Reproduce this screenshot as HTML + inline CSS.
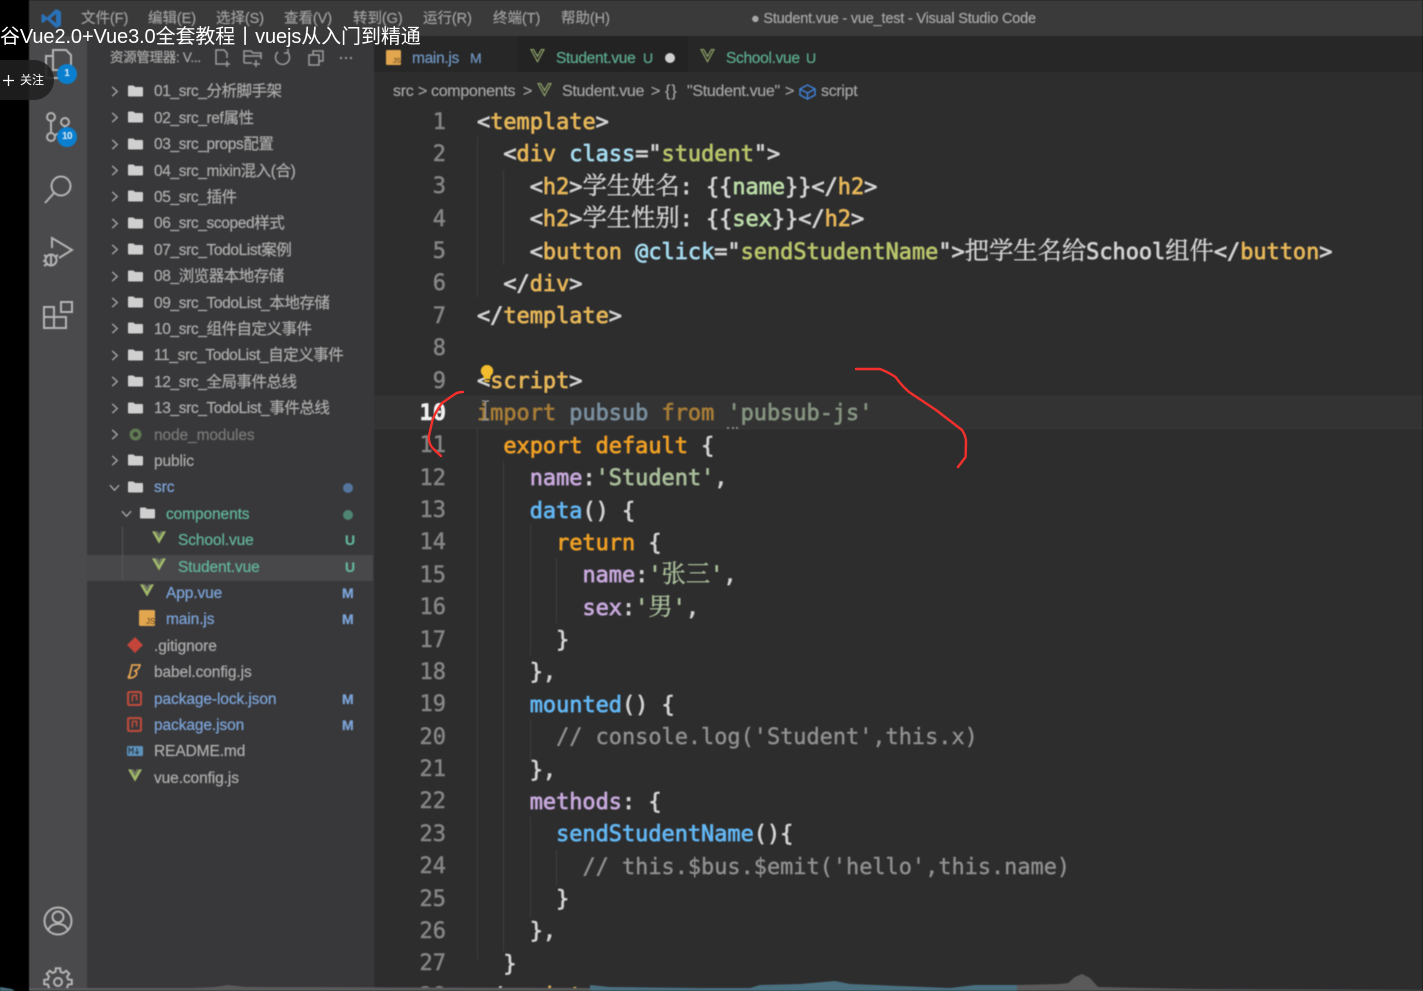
<!DOCTYPE html>
<html lang="zh"><head><meta charset="utf-8"><title>Student.vue - vue_test - Visual Studio Code</title>
<style>
html,body{margin:0;padding:0;background:#000;width:1423px;height:991px;overflow:hidden}
*{box-sizing:border-box}
#video{position:absolute;left:0;top:0;width:1423px;height:991px;overflow:hidden;filter:blur(.55px)}
.ui{font-family:"Liberation Sans","Noto Sans CJK SC",sans-serif;white-space:nowrap}
.menu span{position:absolute;top:9px;font-size:14.5px;line-height:20px;color:#a0a0a0;letter-spacing:-.05px;-webkit-text-stroke:.2px currentColor}
#tree{position:absolute;left:87px;top:79.3px;width:286px}
#tree .r{position:relative;height:26.42px;line-height:26.42px;font-size:15.5px;letter-spacing:-.1px;color:#ababab;white-space:nowrap;-webkit-text-stroke:.25px currentColor}
#tree .r:nth-child(-n+13) .t{letter-spacing:-.38px}
#tree .r i{font-style:normal;letter-spacing:-.5px}
#tree .r.sel{background:#48484a}
#tree .t{position:absolute;left:67px;top:0}
#tree .t.d1{left:79px}#tree .t.d2{left:91px}
#tree .c{position:absolute;left:22px;top:6.5px}
#tree .f{position:absolute;left:41px;top:5.5px}
#tree .st{position:absolute;left:255px;top:-1px;font-weight:bold;font-size:14px}
.g{color:#62b39a}.b{color:#7ba2d6}
.tab span,.bc span,.bc svg,.tab svg{position:absolute}
#nums{position:absolute;left:400px;top:106.5px;width:46px;text-align:right;font-family:"DejaVu Sans Mono","Liberation Mono",monospace;font-size:22px;line-height:32.38px;color:#858585;-webkit-text-stroke:.5px currentColor}
#nums div{height:32.38px}
#code{position:absolute;left:477px;top:107px;font-family:"DejaVu Sans Mono","Liberation Mono",monospace;font-size:21.9px;line-height:32.38px;color:#d2d2d2;-webkit-text-stroke:.75px currentColor}
#code div{height:32.38px;white-space:pre}
.tg{color:#e6b658}.at{color:#a4dbef}.s{color:#b9c46a}.kw{color:#ee9f24}.pr{color:#c7a8dc}.fn{color:#62b6f2}.st2{color:#a8bc98}.cm{color:#909090;-webkit-text-stroke:.4px currentColor}.nm{color:#b9dba6}
.cj{font-family:"Noto Serif CJK SC","Noto Sans CJK SC",serif;font-size:24.3px;line-height:0;-webkit-text-stroke:.4px currentColor}
.gd{position:absolute;width:1px;background:#3f3f3f}
</style></head>
<body>
<svg width="0" height="0" style="position:absolute"><defs>
<symbol id="chev" viewBox="0 0 12 12"><path d="M3.500 1 9 6 3.500 11" fill="none" stroke="#a6a6a6" stroke-width="1.500"/></symbol>
<symbol id="chevd" viewBox="0 0 12 12"><path d="M1 3.500 6 9 11 3.500" fill="none" stroke="#a6a6a6" stroke-width="1.500"/></symbol>
<symbol id="folder" viewBox="0 0 15 12"><path d="M0 1.500Q0 .5 1 .5H5.500L7 2H14Q15 2 15 3V10.500Q15 11.500 14 11.500H1Q0 11.500 0 10.500Z" fill="#cfcfcf"/></symbol>
<symbol id="vue" viewBox="0 0 16 14"><path d="M0 0H3.500L8 8 12.500 0H16L8 14Z" fill="#a1b96a"/><path d="M3.500 0H6.500L8 3 9.500 0H12.500L8 8Z" fill="#6e7560"/></symbol>
<symbol id="vue2" viewBox="0 0 16 16"><path d="M.5 .5H3.500L8 8.500 12.500 .5H15.500L8 14.500Z" fill="none" stroke="#92a86a" stroke-width="1.300"/></symbol>
<symbol id="js" viewBox="0 0 16 16"><rect width="16" height="16" rx="1.500" fill="#e2a64f"/><text x="7" y="14" font-family="Liberation Sans" font-size="8" fill="#5b4322">JS</text></symbol>
<symbol id="pkg" viewBox="0 0 14 14"><rect x="1" y="1" width="12" height="12" rx="1" fill="none" stroke="#bb4a3c" stroke-width="2"/><path d="M5 4V10M5 4H9V9" fill="none" stroke="#bb4a3c" stroke-width="1.500"/></symbol>
</defs></svg>

<div id="video">
<!-- panels -->
<div style="position:absolute;left:29px;top:0;width:1394px;height:36px;background:#3a3a3b"></div>
<div style="position:absolute;left:29px;top:36px;width:58px;height:955px;background:#4a4a4c"></div>
<div style="position:absolute;left:87px;top:36px;width:287px;height:955px;background:#38383a"></div>
<div style="position:absolute;left:374px;top:36px;width:1049px;height:36px;background:#272727"></div>
<div style="position:absolute;left:518px;top:36px;width:170px;height:36px;background:#232323"></div>
<div style="position:absolute;left:374px;top:72px;width:1049px;height:919px;background:#2d2d2e"></div>

<!-- title bar -->
<svg style="position:absolute;left:41px;top:8px" width="21" height="21" viewBox="0 0 21 21"><path d="M15 1 20 3.500V17.500L15 20 6 11.500 2 15 .5 14V7L2 6 6 9.500ZM15 6 9.500 10.500 15 15Z" fill="#2a72b8"/></svg>
<div class="ui menu">
<span style="left:81px">文件(F)</span><span style="left:148px">编辑(E)</span><span style="left:216px">选择(S)</span><span style="left:284px">查看(V)</span><span style="left:353px">转到(G)</span><span style="left:423px">运行(R)</span><span style="left:493px">终端(T)</span><span style="left:561px">帮助(H)</span>
<span style="left:751px;font-size:14.5px;letter-spacing:-.2px;color:#a8a8a8">● Student.vue - vue_test - Visual Studio Code</span>
</div>

<!-- activity bar -->
<svg style="position:absolute;left:29px;top:36px" width="58" height="955" viewBox="0 0 58 955" fill="none" stroke="#b4b4b4" stroke-width="2">
<path d="M24 14H37L42 19V34H24ZM24 20H17V42H33V34"/>
<circle cx="22" cy="81" r="4"/><circle cx="22" cy="101" r="4"/><circle cx="36" cy="86" r="4"/><path d="M22 85V97M36 90Q36 95 26 99"/>
<circle cx="32" cy="150" r="9.500"/><path d="M25 157 16 167"/>
<path d="M23 212V202L43 214 30 222"/><circle cx="22" cy="224" r="5.500"/><path d="M15 219 18 221M15 230 18 228M29 219 26 221M14 225H17M22 218V230"/>
<path d="M15 271H25V292H15ZM15 281H37V292H25V281M32 266H43V276H32Z"/>
<circle cx="29" cy="885" r="13.500"/><circle cx="29" cy="881" r="5.500"/><path d="M19 895Q21 888 29 888 37 888 39 895"/>
<g transform="translate(29 946)"><circle r="4"/><path d="M-2.500 -10.200-2.200 -13.800 2.200 -13.800 2.500 -10.200 5.400 -9 8.200 -11.300 11.300 -8.200 9 -5.400 10.200 -2.500 13.800 -2.200 13.800 2.200 10.200 2.500 9 5.400 11.300 8.200 8.200 11.300 5.400 9 2.500 10.200 2.200 13.800 -2.200 13.800 -2.500 10.200 -5.400 9 -8.200 11.300 -11.300 8.200 -9 5.400 -10.200 2.500 -13.800 2.200 -13.800 -2.200 -10.200 -2.500 -9 -5.400 -11.300 -8.200 -8.200 -11.300 -5.400 -9Z"/></g>
</svg>
<div class="ui" style="position:absolute;left:57px;top:64px;width:20px;height:20px;border-radius:50%;background:#0a7fd0;color:#dfeaf5;font-size:10px;line-height:20px;text-align:center;font-weight:bold">1</div>
<div class="ui" style="position:absolute;left:57px;top:127px;width:20px;height:20px;border-radius:50%;background:#0a7fd0;color:#dfeaf5;font-size:10px;line-height:20px;text-align:center;font-weight:bold;letter-spacing:-.5px">10</div>

<!-- explorer header -->
<div class="ui" style="position:absolute;left:110px;top:48px;font-size:13.5px;line-height:20px;color:#a5a5a5;letter-spacing:-.3px;-webkit-text-stroke:.3px currentColor">资源管理器: V...</div>
<svg style="position:absolute;left:212px;top:47px" width="146" height="22" viewBox="0 0 146 22" fill="none" stroke="#9c9c9c" stroke-width="1.500">
<path d="M12 17H4V3H12L15 6V11M15 14V20M12 17H18"/>
<path d="M32 16V4H39L41 6H49V12M44 13V20M41 17H48M32 16H40M32 9H49"/>
<path d="M66 5A7 7 0 1 0 76 6M76 2V6H72" />
<path d="M97 8H107V18H97ZM101 8V4H111V14H107"/>
<path d="M128 11H130M133 11H135M138 11H140" stroke-width="2"/>
</svg>

<!-- tabs -->
<div class="ui tab" style="font-size:15.5px;letter-spacing:-.3px;-webkit-text-stroke:.25px currentColor">
<svg style="left:386px;top:50px" width="15" height="15"><use href="#js"/></svg>
<span style="left:412px;top:50px;color:#6e93bf">main.js</span><span style="left:470px;top:50px;color:#6e93bf;font-size:14px">M</span>
<svg style="left:530px;top:49px" width="15" height="14"><use href="#vue2"/></svg>
<span style="left:556px;top:50px;color:#5cab8e">Student.vue</span><span style="left:643px;top:50px;color:#5cab8e;font-size:14px">U</span>
<span style="left:665px;top:53px;width:10px;height:10px;border-radius:50%;background:#d0d0d0"></span>
<svg style="left:700px;top:49px" width="15" height="14"><use href="#vue2"/></svg>
<span style="left:726px;top:50px;color:#5cab8e">School.vue</span><span style="left:806px;top:50px;color:#5cab8e;font-size:14px">U</span>
</div>

<!-- breadcrumbs -->
<div class="ui bc" style="font-size:16px;letter-spacing:-.3px;color:#a4a4a4;-webkit-text-stroke:.2px currentColor">
<span style="left:393px;top:83px">src</span><span style="left:418px;top:83px">&gt;</span><span style="left:431px;top:83px">components</span><span style="left:523px;top:83px">&gt;</span>
<svg style="left:537px;top:83px" width="15" height="14"><use href="#vue2"/></svg>
<span style="left:562px;top:83px">Student.vue</span><span style="left:651px;top:83px">&gt;</span><span style="left:665px;top:83px;letter-spacing:1px">{}</span><span style="left:687px;top:83px">"Student.vue"</span><span style="left:785px;top:83px">&gt;</span>
<svg style="left:799px;top:84px" width="17" height="16" viewBox="0 0 17 16" fill="none" stroke="#3f7fd0" stroke-width="1.500"><path d="M8.500 1 16 5V11L8.500 15 1 11V5ZM1 5 8.500 9 16 5M8.500 9V15"/></svg>
<span style="left:821px;top:83px">script</span>
</div>

<!-- tree -->
<div id="tree" class="ui">
<div class="r"><svg class="c" width="11" height="11"><use href="#chev"/></svg><svg class="f" width="15" height="12"><use href="#folder"/></svg><span class="t">01_src_<i>分析脚手架</i></span></div>
<div class="r"><svg class="c" width="11" height="11"><use href="#chev"/></svg><svg class="f" width="15" height="12"><use href="#folder"/></svg><span class="t">02_src_ref<i>属性</i></span></div>
<div class="r"><svg class="c" width="11" height="11"><use href="#chev"/></svg><svg class="f" width="15" height="12"><use href="#folder"/></svg><span class="t">03_src_props<i>配置</i></span></div>
<div class="r"><svg class="c" width="11" height="11"><use href="#chev"/></svg><svg class="f" width="15" height="12"><use href="#folder"/></svg><span class="t">04_src_mixin<i>混入</i>(<i>合</i>)</span></div>
<div class="r"><svg class="c" width="11" height="11"><use href="#chev"/></svg><svg class="f" width="15" height="12"><use href="#folder"/></svg><span class="t">05_src_<i>插件</i></span></div>
<div class="r"><svg class="c" width="11" height="11"><use href="#chev"/></svg><svg class="f" width="15" height="12"><use href="#folder"/></svg><span class="t">06_src_scoped<i>样式</i></span></div>
<div class="r"><svg class="c" width="11" height="11"><use href="#chev"/></svg><svg class="f" width="15" height="12"><use href="#folder"/></svg><span class="t">07_src_TodoList<i>案例</i></span></div>
<div class="r"><svg class="c" width="11" height="11"><use href="#chev"/></svg><svg class="f" width="15" height="12"><use href="#folder"/></svg><span class="t">08_<i>浏览器本地存储</i></span></div>
<div class="r"><svg class="c" width="11" height="11"><use href="#chev"/></svg><svg class="f" width="15" height="12"><use href="#folder"/></svg><span class="t">09_src_TodoList_<i>本地存储</i></span></div>
<div class="r"><svg class="c" width="11" height="11"><use href="#chev"/></svg><svg class="f" width="15" height="12"><use href="#folder"/></svg><span class="t">10_src_<i>组件自定义事件</i></span></div>
<div class="r"><svg class="c" width="11" height="11"><use href="#chev"/></svg><svg class="f" width="15" height="12"><use href="#folder"/></svg><span class="t">11_src_TodoList_<i>自定义事件</i></span></div>
<div class="r"><svg class="c" width="11" height="11"><use href="#chev"/></svg><svg class="f" width="15" height="12"><use href="#folder"/></svg><span class="t">12_src_<i>全局事件总线</i></span></div>
<div class="r"><svg class="c" width="11" height="11"><use href="#chev"/></svg><svg class="f" width="15" height="12"><use href="#folder"/></svg><span class="t">13_src_TodoList_<i>事件总线</i></span></div>
<div class="r"><svg class="c" width="11" height="11"><use href="#chev"/></svg><svg class="f" width="15" height="13" viewBox="0 0 15 13"><circle cx="7.500" cy="6.500" r="6" fill="#5f7a52"/><circle cx="7.500" cy="6.500" r="2.500" fill="#38383a"/></svg><span class="t" style="color:#777">node_modules</span></div>
<div class="r"><svg class="c" width="11" height="11"><use href="#chev"/></svg><svg class="f" width="15" height="12"><use href="#folder"/></svg><span class="t">public</span></div>
<div class="r"><svg class="c" width="11" height="11"><use href="#chevd"/></svg><svg class="f" width="15" height="12"><use href="#folder"/></svg><span class="t b">src</span><span style="position:absolute;left:256px;top:8px;width:10px;height:10px;border-radius:50%;background:#55749b"></span></div>
<div class="r"><svg class="c" style="left:34px" width="11" height="11"><use href="#chevd"/></svg><svg class="f" style="left:53px" width="15" height="12"><use href="#folder"/></svg><span class="t d1 g">components</span><span style="position:absolute;left:256px;top:8px;width:10px;height:10px;border-radius:50%;background:#4f8573"></span></div>
<div class="r"><svg class="f" style="left:65px;top:3px" width="14" height="13"><use href="#vue"/></svg><span class="t d2 g">School.vue</span><span class="st g" style="left:258px">U</span></div>
<div class="r sel"><svg class="f" style="left:65px;top:3px" width="14" height="13"><use href="#vue"/></svg><span class="t d2 g">Student.vue</span><span class="st g" style="left:258px">U</span></div>
<div class="r"><svg class="f" style="left:53px;top:3px" width="14" height="13"><use href="#vue"/></svg><span class="t d1 b">App.vue</span><span class="st b">M</span></div>
<div class="r"><svg class="f" style="left:52px;top:3px" width="16" height="16"><use href="#js"/></svg><span class="t d1 b">main.js</span><span class="st b">M</span></div>
<div class="r"><svg class="f" style="left:40px;top:3px" width="16" height="16" viewBox="0 0 16 16"><path d="M8 0 16 8 8 16 0 8Z" fill="#c4453a"/></svg><span class="t">.gitignore</span></div>
<div class="r"><svg class="f" style="left:40px;top:3px" width="15" height="16" viewBox="0 0 15 16" fill="none" stroke="#e0a050" stroke-width="1.800"><path d="M5 2H13Q12 7 7 8 11 8 9 12 7 15 2 15ZM3 11 1 15"/></svg><span class="t">babel.config.js</span></div>
<div class="r"><svg class="f" style="left:40px;top:4px" width="15" height="15"><use href="#pkg"/></svg><span class="t b">package-lock.json</span><span class="st b">M</span></div>
<div class="r"><svg class="f" style="left:40px;top:4px" width="15" height="15"><use href="#pkg"/></svg><span class="t b">package.json</span><span class="st b">M</span></div>
<div class="r"><svg class="f" style="left:40px;top:7px" width="16" height="10" viewBox="0 0 16 10"><rect width="16" height="10" rx="1.500" fill="#5d93bd"/><path d="M2 8V2L4 5 6 2V8M10 2V7M8 5.500 10 8 12 5.500" fill="none" stroke="#2f3a44" stroke-width="1"/></svg><span class="t">README.md</span></div>
<div class="r"><svg class="f" style="left:41px;top:3px" width="14" height="13"><use href="#vue"/></svg><span class="t">vue.config.js</span></div>
</div>
<div style="position:absolute;left:122px;top:527px;width:1px;height:53px;background:#555"></div>

<!-- editor -->
<div style="position:absolute;left:374px;top:396px;width:1049px;height:33px;background:#333334;border-top:1px solid #383838;border-bottom:1px solid #383838"></div>
<div class="gd" style="left:477px;top:137px;height:160px"></div>
<div class="gd" style="left:477px;top:429px;height:530px"></div>
<div class="gd" style="left:503px;top:170px;height:95px"></div>
<div class="gd" style="left:503px;top:461px;height:490px"></div>
<div class="gd" style="left:530px;top:525px;height:130px"></div>
<div class="gd" style="left:530px;top:720px;height:40px"></div>
<div class="gd" style="left:530px;top:817px;height:100px"></div>
<div class="gd" style="left:556px;top:558px;height:65px"></div>
<div class="gd" style="left:556px;top:850px;height:35px"></div>

<div id="nums"><div>1</div><div>2</div><div>3</div><div>4</div><div>5</div><div>6</div><div>7</div><div>8</div><div>9</div><div style="color:#f0f0f0;font-weight:bold">10</div><div>11</div><div>12</div><div>13</div><div>14</div><div>15</div><div>16</div><div>17</div><div>18</div><div>19</div><div>20</div><div>21</div><div>22</div><div>23</div><div>24</div><div>25</div><div>26</div><div>27</div><div>28</div></div>

<div id="code"><div>&lt;<span class="tg">template</span>&gt;</div><div>  &lt;<span class="tg">div</span> <span class="at">class</span>="<span class="s">student</span>"&gt;</div><div>    &lt;<span class="tg">h2</span>&gt;<span class="cj">学生姓名</span>: {{<span class="nm">name</span>}}&lt;/<span class="tg">h2</span>&gt;</div><div>    &lt;<span class="tg">h2</span>&gt;<span class="cj">学生性别</span>: {{<span class="nm">sex</span>}}&lt;/<span class="tg">h2</span>&gt;</div><div>    &lt;<span class="tg">button</span> <span class="at">@click</span>="<span class="s">sendStudentName</span>"&gt;<span class="cj">把学生名给</span>School<span class="cj">组件</span>&lt;/<span class="tg">button</span>&gt;</div><div>  &lt;/<span class="tg">div</span>&gt;</div><div>&lt;/<span class="tg">template</span>&gt;</div><div> </div><div>&lt;<span class="tg">script</span>&gt;</div><div><span style="color:#a67c36">import</span> <span style="color:#7a8f9e">pubsub</span> <span style="color:#a67c36">from</span> <span style="color:#84937f">'pubsub-js'</span></div><div>  <span class="kw">export</span> <span class="kw">default</span> {</div><div>    <span class="pr">name</span>:<span class="st2">'Student'</span>,</div><div>    <span class="fn">data</span>() {</div><div>      <span class="kw">return</span> {</div><div>        <span class="pr">name</span>:<span class="st2">'<span class="cj">张三</span>'</span>,</div><div>        <span class="pr">sex</span>:<span class="st2">'<span class="cj">男</span>'</span>,</div><div>      }</div><div>    },</div><div>    <span class="fn">mounted</span>() {</div><div>      <span class="cm">// console.log('Student',this.x)</span></div><div>    },</div><div>    <span class="pr">methods</span>: {</div><div>      <span class="fn">sendStudentName</span>(){</div><div>        <span class="cm">// this.$bus.$emit('hello',this.name)</span></div><div>      }</div><div>    },</div><div>  }</div><div>&lt;/<span class="tg">script</span>&gt;</div></div>

<!-- bulb & cursor -->
<svg style="position:absolute;left:480px;top:365px" width="14" height="19" viewBox="0 0 14 19"><path d="M7 0A6 6 0 0 1 10.500 11V14H3.500V11A6 6 0 0 1 7 0Z" fill="#f2bc2e"/><rect x="4.500" y="15" width="5" height="2" fill="#f2bc2e"/></svg>
<svg style="position:absolute;left:481px;top:400px" width="9" height="21" viewBox="0 0 9 21" fill="none" stroke="#9a9a9a" stroke-width="1.300"><path d="M1 1H3.500L4.500 2 5.500 1H8M4.500 2V19M1 20H3.500L4.500 19 5.500 20H8"/></svg>
<div style="position:absolute;left:727px;top:427px;width:11px;height:2px;border-top:2px dotted #888"></div>

<!-- bottom strip -->
<svg style="position:absolute;left:0;top:970px" width="1423" height="21" viewBox="0 0 1423 21">
<path d="M29 18H190L215 17 228 15 245 17 590 18V21H29Z" fill="#5a5a5b"/>
<path d="M0 21V17L12 19 15 21Z" fill="#4a7080"/>
<path d="M590 21V15L610 17 700 18 750 18 760 15 800 14 835 11 850 14 950 18 975 15 1017 15V21Z" fill="#4a6f7e"/>
<path d="M1017 21V15L1060 14 1068 13 1075 7 1082 4 1090 8 1098 17 1200 19 1423 20V21Z" fill="#5a5a5b"/>
</svg>
</div>

<!-- red annotation -->
<svg style="position:absolute;left:0;top:0" width="1423" height="991" fill="none" stroke="#f5302c" stroke-width="2.400" stroke-linecap="round" stroke-linejoin="round">
<path d="M463 392Q458 392 455 394L442 403Q436 411 432.500 420L428.700 437Q429 444 432.500 448L441 456"/>
<path d="M856 369 880 369Q888 372 895.600 377Q901 385 909 392L936 410 962 430Q966 436 966 442L965.600 457 958 467"/>
</svg>

<!-- overlay -->
<div class="ui" style="position:absolute;left:0;top:25px;font-size:20px;line-height:24px;color:#fff;letter-spacing:-.1px">谷Vue2.0+Vue3.0全套教程丨vuejs从入门到精通</div>
<div style="position:absolute;left:-20px;top:60px;width:74px;height:40px;border-radius:20px;background:rgba(32,32,32,.88)"></div>
<svg style="position:absolute;left:3px;top:75px" width="11" height="11"><path d="M5.500 0V11M0 5.500H11" stroke="#fff" stroke-width="1.300"/></svg>
<div class="ui" style="position:absolute;left:20px;top:71px;font-size:12px;line-height:18px;color:#fff">关注</div>
</body></html>
